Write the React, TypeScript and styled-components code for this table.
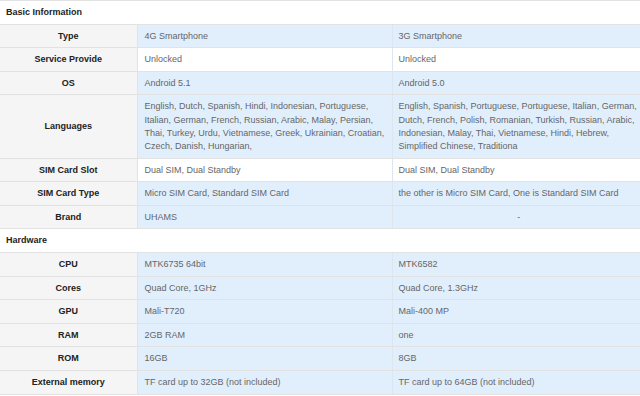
import React from 'react';
import styled, { createGlobalStyle } from 'styled-components';

const GlobalStyle = createGlobalStyle`
  html, body {
    margin: 0;
    padding: 0;
    background: #fff;
  }
`;

const _Table = styled.table`
  width: 640px;
  border-collapse: collapse;
  table-layout: fixed;
  font-family: "Liberation Sans", Arial, sans-serif;
  font-size: 9px;
  line-height: 13.2px;
`;

const _Col = styled.col<{ $w?: number }>`
  width: ${(p) => (p.$w ? `${p.$w}px` : 'auto')};
`;

const _Section = styled.td`
  padding: 5px 6px 4.4px;
  border-top: 1px solid #e2e2e2;
  border-bottom: 1px solid #e2e2e2;
  background: #fff;
  color: #222;
  font-weight: bold;
`;

const _Label = styled.td`
  padding: 5px 6px 4.4px;
  border: 1px solid #e2e2e2;
  border-left: none;
  background: #f5f5f5;
  color: #222;
  font-weight: bold;
  text-align: center;
`;

const _Value = styled.td<{ $plain?: boolean; $center?: boolean }>`
  padding: 5px 6px 4.4px 7px;
  border: 1px solid #e2e2e2;
  border-right: none;
  background: ${(p) => (p.$plain ? '#fff' : '#e1effd')};
  color: #666;
  text-align: ${(p) => (p.$center ? 'center' : 'left')};
  & + & {
    padding-left: 6px;
    padding-right: 1px;
    border-left: 1px solid #dde6ee;
  }
`;

type Row = {
  label: string;
  a: string;
  b: string;
  plain?: boolean;
};

const basic: Row[] = [
  { label: 'Type', a: '4G Smartphone', b: '3G Smartphone' },
  { label: 'Service Provide', a: 'Unlocked', b: 'Unlocked', plain: true },
  { label: 'OS', a: 'Android 5.1', b: 'Android 5.0' },
  {
    label: 'Languages',
    a: 'English, Dutch, Spanish, Hindi, Indonesian, Portuguese, Italian, German, French, Russian, Arabic, Malay, Persian, Thai, Turkey, Urdu, Vietnamese, Greek, Ukrainian, Croatian, Czech, Danish, Hungarian,',
    b: 'English, Spanish, Portuguese, Portuguese, Italian, German, Dutch, French, Polish, Romanian, Turkish, Russian, Arabic, Indonesian, Malay, Thai, Vietnamese, Hindi, Hebrew, Simplified Chinese, Traditiona',
  },
  { label: 'SIM Card Slot', a: 'Dual SIM, Dual Standby', b: 'Dual SIM, Dual Standby', plain: true },
  { label: 'SIM Card Type', a: 'Micro SIM Card, Standard SIM Card', b: 'the other is Micro SIM Card, One is Standard SIM Card' },
  { label: 'Brand', a: 'UHAMS', b: '-' },
];

const hardware: Row[] = [
  { label: 'CPU', a: 'MTK6735 64bit', b: 'MTK6582' },
  { label: 'Cores', a: 'Quad Core, 1GHz', b: 'Quad Core, 1.3GHz' },
  { label: 'GPU', a: 'Mali-T720', b: 'Mali-400 MP' },
  { label: 'RAM', a: '2GB RAM', b: 'one' },
  { label: 'ROM', a: '16GB', b: '8GB' },
  { label: 'External memory', a: 'TF card up to 32GB (not included)', b: 'TF card up to 64GB (not included)' },
];

function Rows({ title, rows }: { title: string; rows: Row[] }) {
  return (
    <>
      <tr>
        <_Section colSpan={3}>{title}</_Section>
      </tr>
      {rows.map((r) => (
        <tr key={r.label}>
          <_Label>{r.label}</_Label>
          <_Value $plain={r.plain}>{r.a}</_Value>
          <_Value $plain={r.plain} $center={r.b === '-'}>{r.b}</_Value>
        </tr>
      ))}
    </>
  );
}

function App() {
  return (
    <>
      <GlobalStyle />
      <_Table>
        <colgroup>
          <_Col $w={137} />
          <_Col $w={255} />
          <_Col />
        </colgroup>
        <tbody>
          <Rows title="Basic Information" rows={basic} />
          <Rows title="Hardware" rows={hardware} />
        </tbody>
      </_Table>
    </>
  );
}

export default App;
